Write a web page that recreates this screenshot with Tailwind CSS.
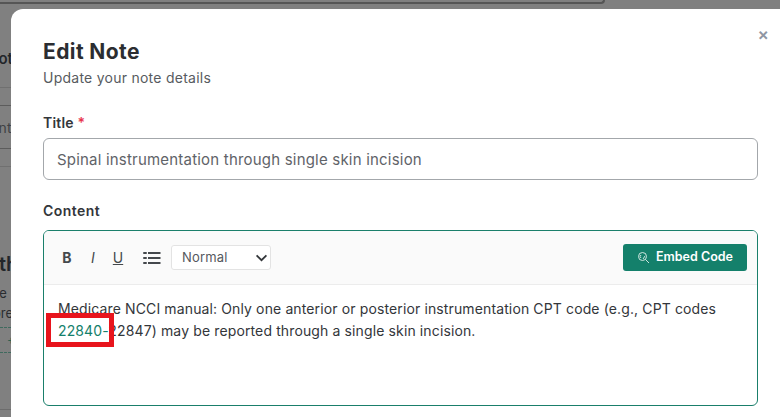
<!doctype html>
<html>
<head>
<meta charset="utf-8">
<script src="https://cdn.jsdelivr.net/npm/@tailwindcss/browser@4"></script>
</head>
<body class="m-0 h-[417px] w-[780px] overflow-hidden bg-[#808080] font-['Inter',sans-serif]">
<div class="relative h-[417px] w-[780px] overflow-hidden">
  <!-- dimmed page behind the dialog -->
  <div class="absolute inset-x-0 top-0 h-[417px]">
    <div class="h-[4px] w-[605px] rounded-br-[5px] border-b-2 border-r-2 border-[#555555]"></div>
    <div class="ml-[-13px] h-[83px] pt-[45px] text-[15px] font-semibold leading-5 text-[#23262a]">Not</div>
    <div class="h-px bg-[#707070]"></div>
    <div class="mt-[17px] h-px bg-[#5c5c5c]"></div>
    <div class="ml-[-20px] flex h-[42px] items-center text-[14px] text-[#3f4245]">Cont</div>
    <div class="h-px bg-[#5c5c5c]"></div>
    <div class="mt-[17px] h-px bg-[#707070]"></div>
    <div class="ml-[-14px] mt-[85px] text-[20px] font-semibold leading-6 text-[#23262a]">Sth</div>
    <div class="ml-[-8px] mt-[7px] text-[13px] leading-[20px] text-[#2a2d30]">ae<br><span class="ml-[1px]">ore</span></div>
    <div class="mt-[4px] w-[11px] border-t border-dashed border-[#3f6a5e]"></div>
    <div class="pl-[7px] text-[12px] leading-[24px] text-[#2f5f52]">+</div>
    <div class="w-[11px] border-t border-dashed border-[#3f6a5e]"></div>
    <div class="mt-[56px] h-px bg-[#6c6c6c]"></div>
  </div>

  <!-- dialog -->
  <div class="absolute left-[11px] top-[9px] h-[420px] w-[769px] rounded-tl-[12px] bg-white pl-[32px] pr-[22px] pt-[31px]">
    <button class="absolute right-[11px] top-[19px] text-[17px] leading-[12px] font-semibold text-[#8f96a3]">×</button>
    <h2 class="text-[21px] font-bold leading-6 tracking-[0.4px] text-[#2b2d31]">Edit Note</h2>
    <p class="mt-[4px] text-[14px] leading-5 tracking-[0.25px] text-[#575b60]">Update your note details</p>
    <label class="mt-[25px] block text-[14px] font-semibold leading-5 tracking-[0.2px] text-[#33363a]">Title <span class="text-[#e8344e]">*</span></label>
    <div class="mt-[5px] flex h-[42px] w-[715px] items-center rounded-[6px] border border-[#a3a7ab] px-[13px] pt-[3px] text-[15px] tracking-[0.2px] text-[#5f6368]">Spinal instrumentation through single skin incision</div>
    <label class="mt-[21px] block text-[14px] font-semibold leading-5 tracking-[0.45px] text-[#33363a]">Content</label>
    <div class="mt-[9px] h-[176px] w-[715px] overflow-hidden rounded-[6px] border border-[#1a7f6b]">
      <div class="flex h-[54px] items-center border-b border-[#ececec] bg-[#fafafa] pl-[17px] pr-[10px] text-[#44484c]">
        <span class="w-[12px] text-center text-[14px] font-bold leading-none">B</span>
        <span class="ml-[15px] w-[10px] text-center text-[14px] italic leading-none">I</span>
        <span class="ml-[14px] w-[12px] text-center text-[14px] leading-none underline">U</span>
        <svg class="ml-[19px]" width="18" height="14" viewBox="0 0 18 14" fill="none" stroke="#44484c" stroke-width="2"><path d="M5 2h12.500M5 7h12.500M5 12h12.500"/><path d="M1 2h2M1 7h2M1 12h2" stroke-linecap="round"/></svg>
        <div class="ml-[10px] flex h-[25px] w-[100px] items-center justify-between rounded-[3px] border border-[#e3e3e3] bg-white pl-[10px] pr-[2px] pt-px text-[13px] tracking-[0.2px] text-[#55595e]">
          <span>Normal</span>
          <svg width="13" height="8" viewBox="0 0 14 9" fill="none" stroke="#33363a" stroke-width="2"><path d="M1.500 1.500 7 7l5.500-5.500"/></svg>
        </div>
        <button class="ml-auto flex h-[27px] w-[124px] items-center justify-center gap-[6px] rounded-[3px] bg-[#14806b] text-[12.5px] font-semibold text-white">
          <svg width="13" height="13" viewBox="0 0 13 13" fill="none" stroke="#cfe6e0" stroke-width="1"><circle cx="5.500" cy="5.500" r="4"/><path d="m8.500 8.500 3.500 3.500M4 4l-1 1.500 1 1.500M6 8l2-3"/></svg>
          Embed Code
        </button>
      </div>
      <div class="px-[14px] pt-[13px] text-[14px] leading-[22px] tracking-[0.125px] text-[#33363a]">Medicare NCCI manual: Only one anterior or posterior instrumentation CPT code (e.g., CPT codes <span class="text-[#14806b]">22840-</span>22847) may be reported through a single skin incision.</div>
    </div>
  </div>
  <!-- red annotation drawn on the screenshot -->
  <div class="absolute left-[46px] top-[313px] h-[34px] w-[68px] border-[5px] border-[#e8141c]"></div>
</div>
</body>
</html>
